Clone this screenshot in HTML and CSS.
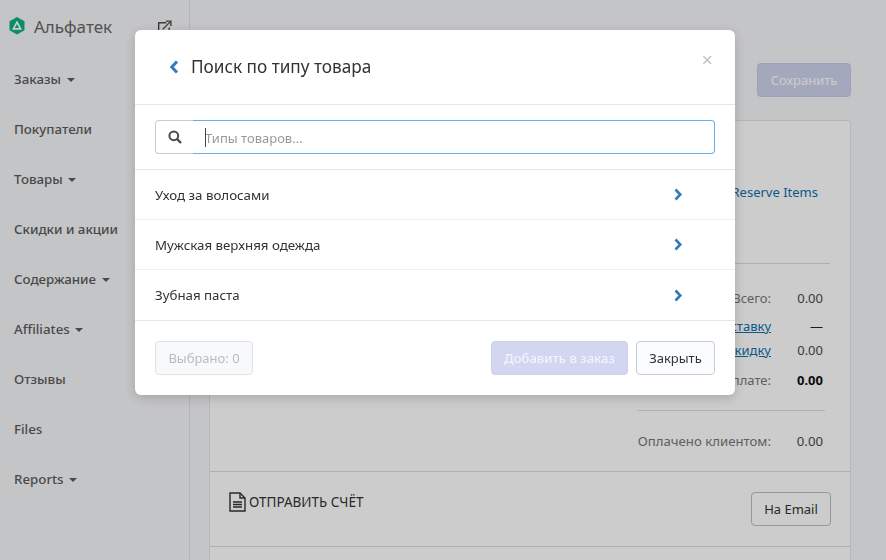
FILE: index.html
```html
<!DOCTYPE html>
<html>
  <head>
    <title>Альфатек</title>
    <link rel="stylesheet" href="styles.css">
  </head>
  <body>
    <div class="page">
      <div class="sidebar">
        <div class="brand">
          <svg class="brand_logo" width="16" height="18" viewBox="0 0 16 18">
            <polygon points="8,0 15.5,4.3 15.5,13.2 8,17.5 0.5,13.2 0.5,4.3" fill="#0eb27c" />
            <polygon points="8,5.2 11.6,11.8 4.4,11.8" fill="none" stroke="#fff" stroke-width="1.7" />
          </svg>
          <span class="brand_name">Альфатек</span>
          <svg class="brand_link" width="15" height="15" viewBox="0 0 16 16" fill="none" stroke="#4a4a4a" stroke-width="1.5">
            <path d="M10 3H1.8v11.2H13V8" />
            <path d="M6 10L14 2" />
            <path d="M9.5 1.2h5.3v5.3" />
          </svg>
        </div>
        <ul class="nav">
          <li>Заказы <i class="caret"></i></li>
          <li>Покупатели</li>
          <li>Товары <i class="caret"></i></li>
          <li>Скидки и акции</li>
          <li>Содержание <i class="caret"></i></li>
          <li>Affiliates <i class="caret"></i></li>
          <li>Отзывы</li>
          <li>Files</li>
          <li>Reports <i class="caret"></i></li>
        </ul>
      </div>

      <div class="main">
        <div class="top_bar">
          <button class="btn_save">Сохранить</button>
        </div>
        <div class="card">
          <div class="card_order">
            <div class="reserve_row"><a href="#">Reserve Items</a></div>
            <div class="totals">
              <span class="label">Всего:</span><span class="value">0.00</span>
              <a class="label label_ship" href="#">Доставку</a><span class="value value_ship">—</span>
              <a class="label" href="#">Скидку</a><span class="value">0.00</span>
              <span class="label label_pay">К оплате:</span><span class="value value_bold">0.00</span>
            </div>
            <div class="paid">
              <span class="label">Оплачено клиентом:</span><span class="value">0.00</span>
            </div>
          </div>
          <div class="card_invoice">
            <div class="invoice_title">
              <svg width="17" height="20" viewBox="0 0 17 20" fill="none" stroke="#333" stroke-width="1.4">
                <path d="M1 1h10l5 5v13H1z" />
                <path d="M11 1v5h5" />
                <path d="M4 10h9M4 12.5h9M4 15h9" />
              </svg>
              <span>ОТПРАВИТЬ СЧЁТ</span>
            </div>
            <button class="btn_email">На Email</button>
          </div>
          <div class="card_rest"></div>
        </div>
      </div>
    </div>

    <div class="overlay">
      <div class="modal">
        <div class="modal_head">
          <svg class="back" width="10" height="14" viewBox="0 0 10 14" fill="none" stroke="#337ab7" stroke-width="3">
            <polyline points="8,1.5 2.8,7 8,12.5" />
          </svg>
          <h3>Поиск по типу товара</h3>
          <span class="close">×</span>
        </div>

        <div class="modal_search">
          <div class="search_icon">
            <svg width="14" height="14" viewBox="0 0 14 14" fill="none" stroke="#4a4a4a" stroke-width="2">
              <circle cx="5.8" cy="5.8" r="4.4" />
              <path d="M9 9l4 4" stroke-width="2.4" />
            </svg>
          </div>
          <div class="search_box">
            <input type="text" placeholder="Типы товаров..." />
            <span class="cursor"></span>
          </div>
        </div>

        <div class="type_row">
          <span>Уход за волосами</span>
          <svg class="chevron" width="9" height="13" viewBox="0 0 9 13" fill="none" stroke="#337ab7" stroke-width="2.6">
            <polyline points="1.5,1.5 6.3,6.5 1.5,11.5" />
          </svg>
        </div>
        <div class="type_row">
          <span>Мужская верхняя одежда</span>
          <svg class="chevron" width="9" height="13" viewBox="0 0 9 13" fill="none" stroke="#337ab7" stroke-width="2.6">
            <polyline points="1.5,1.5 6.3,6.5 1.5,11.5" />
          </svg>
        </div>
        <div class="type_row type_last">
          <span>Зубная паста</span>
          <svg class="chevron" width="9" height="13" viewBox="0 0 9 13" fill="none" stroke="#337ab7" stroke-width="2.6">
            <polyline points="1.5,1.5 6.3,6.5 1.5,11.5" />
          </svg>
        </div>

        <div class="modal_foot">
          <button class="btn_selected">Выбрано: 0</button>
          <button class="btn_add">Добавить в заказ</button>
          <button class="btn_close">Закрыть</button>
        </div>
      </div>
    </div>
  </body>
</html>
```

FILE: styles.css
```css
* {
  margin: 0px;
  padding: 0px;
  box-sizing: border-box;
}
html,
body {
  height: 100%;
  overflow: hidden;
}
body {
  font-family: "Noto Sans", "Open Sans", sans-serif;
  font-size: 14px;
  color: #333;
  background-color: #f6f7f9;
}
button {
  font-family: inherit;
  font-size: 13px;
  border-radius: 4px;
  height: 34px;
}
a {
  color: #0f6fae;
}

.page {
  display: flex;
  height: 100%;
}

.sidebar {
  width: 190px;
  flex-shrink: 0;
  border-right: 1px solid #e0e1e4;
}
.brand {
  display: flex;
  align-items: center;
  height: 52px;
  padding-left: 9px;
}
.brand_name {
  font-size: 17px;
  color: #666;
  margin-left: 9px;
}
.brand_link {
  margin-left: 45px;
  margin-top: 2px;
}
.nav {
  list-style-type: none;
  padding-top: 2px;
}
.nav li {
  height: 50px;
  line-height: 50px;
  padding-left: 14px;
  font-size: 13.3px;
  font-weight: 500;
  color: #5c5c5c;
}
.caret {
  display: inline-block;
  margin-left: 2px;
  vertical-align: middle;
  border-top: 4px solid #5c5c5c;
  border-left: 4px solid transparent;
  border-right: 4px solid transparent;
}

.main {
  flex: 1;
  padding: 0px 35px 0px 19px;
}
.top_bar {
  display: flex;
  justify-content: flex-end;
  padding-top: 63px;
  height: 120px;
}
.btn_save {
  width: 94px;
  background-color: #ced3ec;
  border: 1px solid #c6cbe6;
  color: #fff;
}

.card {
  background-color: #fff;
  border: 1px solid #e2e4e8;
  border-bottom: none;
  border-radius: 3px 3px 0px 0px;
}
.card_order {
  height: 351px;
  padding-top: 62px;
  border-bottom: 1px solid #d9dce1;
}
.reserve_row {
  display: flex;
  justify-content: flex-end;
  padding-right: 32px;
  font-size: 13px;
}
.reserve_row a {
  text-decoration: none;
}
.totals {
  display: grid;
  grid-template-columns: 1fr 52px;
  margin: 62px 20px 0px 428px;
  padding-top: 25px;
  border-top: 1px solid #d9dce1;
  row-gap: 6px;
  font-size: 13px;
  line-height: 18px;
  padding-right: 7px;
}
.label {
  text-align: right;
  color: #777;
  white-space: nowrap;
}
a.label {
  color: #0f6fae;
}
.value {
  text-align: right;
  color: #4a4a4a;
}
.label_ship,
.value_ship {
  margin-top: 4px;
}
.value_ship {
  color: #222;
}
.label_pay {
  margin-top: 6px;
}
.value_bold {
  margin-top: 6px;
  font-weight: 700;
  color: #111;
}
.paid {
  display: grid;
  grid-template-columns: 1fr 52px;
  margin: 21px 25px 0px 427px;
  padding: 21px 2px 0px 0px;
  border-top: 1px solid #d9dce1;
  font-size: 13.2px;
  line-height: 18px;
}
.card_invoice {
  display: flex;
  justify-content: space-between;
  height: 75px;
  padding: 20px 19px 0px 19px;
  border-bottom: 1px solid #d9dce1;
}
.invoice_title {
  display: flex;
  align-items: flex-start;
  gap: 3px;
  font-size: 13.5px;
  line-height: 20px;
  color: #333;
}
.btn_email {
  width: 80px;
  background-color: #fff;
  border: 1px solid #b9bec4;
  color: #333;
}
.card_rest {
  height: 40px;
}

.overlay {
  position: fixed;
  top: 0;
  left: 0;
  right: 0;
  bottom: 0;
  background-color: rgba(0, 0, 0, 0.2);
  padding: 30px 0px 0px 135px;
}
.modal {
  width: 600px;
  height: 365px;
  background-color: #fff;
  border-radius: 6px;
  box-shadow: 0px 3px 12px rgba(0, 0, 0, 0.18);
}
.modal_head {
  display: flex;
  align-items: center;
  height: 75px;
  padding: 0px 22px 0px 34px;
  border-bottom: 1px solid #e6e6e6;
}
.modal_head h3 {
  font-size: 17.2px;
  font-weight: 400;
  color: #333;
  margin-left: 12px;
  margin-top: -1px;
}
.close {
  margin-left: auto;
  margin-top: -16px;
  font-size: 20px;
  color: #c4c4c4;
}

.modal_search {
  display: flex;
  height: 65px;
  padding: 15px 20px;
  border-bottom: 1px solid #e6e6e6;
}
.search_icon {
  display: flex;
  align-items: center;
  justify-content: center;
  width: 38px;
  height: 34px;
  border: 1px solid #ccc;
  border-right: none;
  border-radius: 4px 0px 0px 4px;
}
.search_box {
  position: relative;
  flex: 1;
}
.search_box input {
  width: 100%;
  height: 34px;
  padding: 1px 0px 0px 12px;
  font-family: inherit;
  font-size: 13px;
  border: 1px solid #66afe9;
  border-left: none;
  border-radius: 0px 4px 4px 0px;
  outline: none;
}
.search_box input::placeholder {
  color: #999;
}
.cursor {
  position: absolute;
  left: 12px;
  top: 8px;
  width: 1px;
  height: 19px;
  background-color: #444;
}

.type_row {
  display: flex;
  align-items: center;
  justify-content: space-between;
  height: 50px;
  padding: 0px 52px 0px 20px;
  font-size: 13.3px;
  color: #333;
  border-bottom: 1px solid #eee;
}
.type_last {
  height: 51px;
  border-bottom-color: #e6e6e6;
}

.modal_foot {
  display: flex;
  gap: 8px;
  padding: 20px;
}
.btn_selected {
  width: 98px;
  background-color: #f7f9fb;
  border: 1px solid #dde2e8;
  color: #b6bcc5;
  margin-right: auto;
}
.btn_add {
  width: 137px;
  background-color: #d2d6f0;
  border: 1px solid #cbd0ec;
  color: #f3f4fb;
  font-weight: 500;
}
.btn_close {
  width: 79px;
  background-color: #fbfcfd;
  border: 1px solid #c5cbd6;
  color: #333;
}
```
